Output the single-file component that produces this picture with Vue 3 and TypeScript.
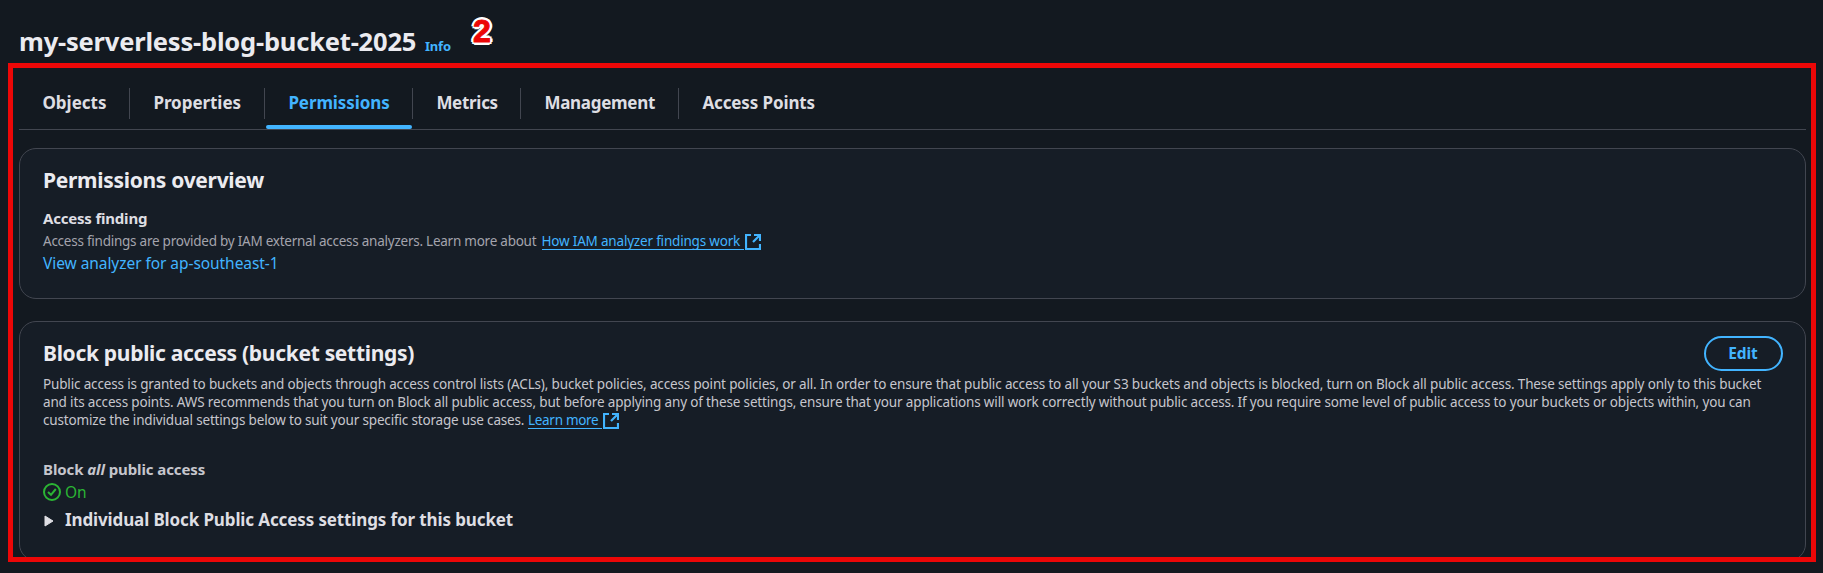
<script setup lang="ts">
interface Tab {
  id: string
  label: string
}

const tabs: Tab[] = [
  { id: 'objects', label: 'Objects' },
  { id: 'properties', label: 'Properties' },
  { id: 'permissions', label: 'Permissions' },
  { id: 'metrics', label: 'Metrics' },
  { id: 'management', label: 'Management' },
  { id: 'access-points', label: 'Access Points' },
]
const activeTab = 'permissions'

const blockAccessLines: string[] = [
  'Public access is granted to buckets and objects through access control lists (ACLs), bucket policies, access point policies, or all. In order to ensure that public access to all your S3 buckets and objects is blocked, turn on Block all public access. These settings apply only to this bucket',
  'and its access points. AWS recommends that you turn on Block all public access, but before applying any of these settings, ensure that your applications will work correctly without public access. If you require some level of public access to your buckets or objects within, you can',
]
</script>

<template>
  <div class="page">
    <header class="title-row">
      <h1 class="title">my-serverless-blog-bucket-2025</h1>
      <a class="info">Info</a>
      <span class="step">2</span>
    </header>

    <main class="frame">
      <nav class="tabs">
        <a v-for="tab in tabs" :key="tab.id" class="tab" :class="[tab.id, { active: tab.id === activeTab }]">
          <span class="tab-label">{{ tab.label }}</span>
        </a>
      </nav>

      <section class="card overview">
        <h2 class="heading">Permissions overview</h2>
        <h3 class="finding">Access finding</h3>
        <p class="finding-text">
          <span class="muted">Access findings are provided by IAM external access analyzers. Learn more about</span>
          <a class="ext-link how">How IAM analyzer findings work</a>
          <svg class="ext-icon" width="16" height="16" viewBox="0 0 16 16">
            <path d="M6 1H1V15H15V10M9 1H15V7M15 1L8 8" />
          </svg>
        </p>
        <a class="analyzer">View analyzer for ap-southeast-1</a>
      </section>

      <section class="card block">
        <div class="block-head">
          <h2 class="heading">Block public access (bucket settings)</h2>
          <button class="edit" type="button">Edit</button>
        </div>
        <div class="description">
          <p v-for="line in blockAccessLines" :key="line" class="line">{{ line }}</p>
          <p class="line last">
            <span>customize the individual settings below to suit your specific storage use cases.</span>
            <a class="ext-link more">Learn more</a>
            <svg class="ext-icon" width="16" height="16" viewBox="0 0 16 16">
              <path d="M6 1H1V15H15V10M9 1H15V7M15 1L8 8" />
            </svg>
          </p>
        </div>
        <h3 class="block-all">Block <em>all</em> public access</h3>
        <div class="status">
          <svg width="18" height="18" viewBox="0 0 18 18">
            <circle cx="9" cy="9" r="8" />
            <path d="M5 9L8 11.8L12.8 6" />
          </svg>
          <span>On</span>
        </div>
        <div class="expander">
          <svg width="10" height="12" viewBox="0 0 10 12"><path d="M1 1L9 6L1 11Z" /></svg>
          <span>Individual Block Public Access settings for this bucket</span>
        </div>
      </section>
    </main>
  </div>
</template>

<style>
body {
  background: #131920;
}
</style>

<style scoped>
.page {
  height: 573px;
  overflow: hidden;
  box-sizing: border-box;
  padding: 0 7px 0 8px;
  background: #131920;
  color: #dedee3;
  font-family: "Noto Sans", "Open Sans", sans-serif;
}
h1, h2, h3, p {
  margin: 0;
}
.title-row {
  display: flex;
  height: 63px;
  padding-left: 11px;
}
.title {
  margin-top: 26px;
  width: 406px;
  font-size: 25.5px;
  line-height: 30px;
  letter-spacing: -0.2px;
  white-space: nowrap;
  color: #ebebf0;
}
.info {
  margin-top: 36px;
  width: 48px;
  font-size: 13px;
  line-height: 20px;
  font-weight: 700;
  letter-spacing: -0.2px;
  color: #42b4ff;
}
.step {
  margin-top: 13px;
  font: 700 32px/37px "Liberation Sans", Arial, sans-serif;
  color: #ec0707;
  -webkit-text-stroke: 1px #ec0707;
  text-shadow: 3px 0 #fff, -3px 0 #fff, 0 3px #fff, 0 -3px #fff,
    2px 2px #fff, -2px 2px #fff, 2px -2px #fff, -2px -2px #fff;
}
.frame {
  height: 499px;
  box-sizing: border-box;
  border: 5px solid #ec0707;
  padding: 0 5px 0 6px;
  overflow: hidden;
}
.tabs {
  display: flex;
  height: 61px;
  border-bottom: 1px solid #424650;
}
.tab {
  position: relative;
  box-sizing: border-box;
  height: 31px;
  margin-top: 20px;
  padding: 3px 0 0 23.4px;
  border-right: 1px solid #424650;
  font-size: 17px;
  line-height: 24px;
  font-weight: 700;
  white-space: nowrap;
}
.objects { width: 111px; }
.properties { width: 135px; letter-spacing: -0.05px; }
.permissions { width: 148px; letter-spacing: -0.1px; }
.metrics { width: 108px; letter-spacing: -0.3px; }
.management { width: 158px; letter-spacing: -0.28px; }
.access-points { letter-spacing: -0.12px; border-right: 0; }
.active {
  color: #42b4ff;
}
.active::after {
  content: "";
  position: absolute;
  left: 1px;
  right: 0;
  bottom: -10px;
  height: 4px;
  border-radius: 2px;
  background: #42b4ff;
}
.card {
  box-sizing: border-box;
  border: 1px solid #424650;
  border-radius: 17px;
  background: #161d26;
  padding: 0 23px;
}
.overview {
  margin-top: 18px;
  height: 151px;
  padding-top: 18px;
}
.heading {
  font-size: 21px;
  line-height: 26px;
  letter-spacing: -0.3px;
  color: #ebebf0;
}
.finding {
  margin-top: 15px;
  font-size: 15px;
  line-height: 20px;
  letter-spacing: -0.2px;
}
.finding-text {
  display: flex;
  margin-top: 4px;
  height: 18px;
  font-size: 13.5px;
  line-height: 18px;
  white-space: nowrap;
}
.muted {
  width: 498.5px;
  letter-spacing: -0.245px;
  color: #a4a4ad;
}
.ext-link {
  box-sizing: border-box;
  height: 18px;
  color: #42b4ff;
  border-bottom: 1px solid #42b4ff;
}
.how {
  width: 202.5px;
  letter-spacing: -0.19px;
}
.ext-icon {
  margin: 2px 0 0 1px;
  fill: none;
  stroke: #42b4ff;
  stroke-width: 2.2;
}
.analyzer {
  display: block;
  margin-top: 2px;
  font-size: 15.5px;
  line-height: 22px;
  letter-spacing: -0.06px;
  color: #42b4ff;
}
.block {
  margin-top: 22px;
  height: 240px;
}
.block-head {
  display: flex;
  justify-content: space-between;
  height: 53px;
}
.block-head .heading {
  margin-top: 18px;
}
.edit {
  box-sizing: border-box;
  margin: 14px -1px 0 0;
  width: 79px;
  height: 35px;
  padding: 0 1px 2px 0;
  border: 2px solid #42b4ff;
  border-radius: 18px;
  background: transparent;
  color: #42b4ff;
  font: 700 15.5px/22px "Noto Sans", sans-serif;
  letter-spacing: -0.1px;
}
.description {
  height: 54px;
  font-size: 13.5px;
  color: #c6c6cd;
}
.line {
  line-height: 18px;
  letter-spacing: -0.154px;
  white-space: nowrap;
}
.last {
  display: flex;
}
.last span {
  width: 485px;
  letter-spacing: -0.17px;
}
.more {
  width: 74px;
  letter-spacing: -0.3px;
}
.block-all {
  margin-top: 30px;
  font-size: 15px;
  line-height: 20px;
  letter-spacing: -0.09px;
  color: #c6c6cd;
}
.status {
  display: flex;
  align-items: center;
  gap: 4px;
  margin-top: 1px;
  height: 24px;
  font-size: 15.5px;
  line-height: 22px;
  color: #2bb534;
}
.status svg {
  fill: none;
  stroke: #2bb534;
  stroke-width: 2;
}
.expander {
  display: flex;
  align-items: center;
  margin-top: 4px;
  padding-left: 1px;
  font-size: 17px;
  line-height: 24px;
  font-weight: 700;
  letter-spacing: -0.12px;
  white-space: nowrap;
}
.expander svg {
  margin: 1px 11px 0 0;
  fill: #dedee3;
  stroke: #dedee3;
  stroke-width: 1;
  stroke-linejoin: round;
}
</style>
